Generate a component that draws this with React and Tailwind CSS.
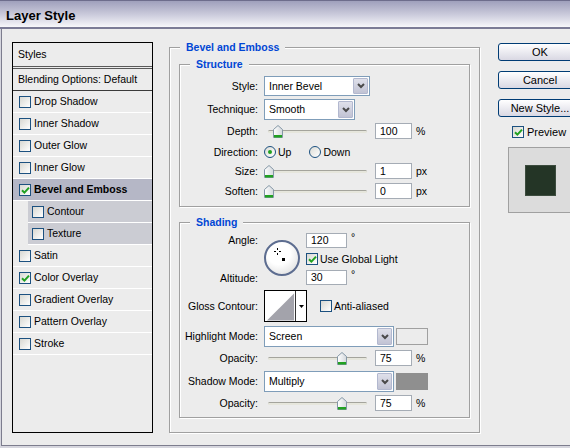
import React from 'react';

const font = { fontFamily: '"Liberation Sans", Arial, sans-serif' };

function Check({ checked }) {
  return (
    <div className="relative h-[12px] w-[12px] shrink-0 border border-[#1c5180] bg-gradient-to-br from-[#d8d8d2] to-white">
      {checked && (
        <svg className="absolute left-[1px] top-[1px]" width="9" height="9" viewBox="0 0 9 9">
          <path d="M1 4.2 L3.4 6.6 L8 1.6" fill="none" stroke="#21a121" strokeWidth="2" />
        </svg>
      )}
    </div>
  );
}

function Radio({ on }) {
  return (
    <div className="flex h-[12px] w-[12px] shrink-0 items-center justify-center rounded-full border border-[#1c5180] bg-gradient-to-br from-[#dcdcd6] to-white">
      {on && <div className="h-[4px] w-[4px] rounded-full bg-[#21a121]" />}
    </div>
  );
}

function Chevron() {
  return (
    <svg width="8" height="6" viewBox="0 0 8 6">
      <polyline points="1,1 4,4 7,1" fill="none" stroke="#4a4a4a" strokeWidth="2" />
    </svg>
  );
}

function Select({ text, w, h }) {
  return (
    <div className={`flex items-stretch border border-[#7f9db9] bg-white ${w} ${h}`}>
      <span className="flex flex-1 items-center pl-[4px]">{text}</span>
      <div className="m-[1px] flex w-[15px] items-center justify-center rounded-[1px] border border-[#b2b8cf] bg-gradient-to-b from-[#dfe0ea] to-[#c1c3d4]">
        <Chevron />
      </div>
    </div>
  );
}

function Input({ value, w = 'w-[37px]', h = 'h-[16px]' }) {
  return (
    <div className={`flex items-center border border-[#a5acb5] bg-white pl-[4px] ${w} ${h}`}>{value}</div>
  );
}

function Slider({ pos }) {
  return (
    <div className="relative h-[14px] w-[111px]">
      <div className="absolute left-[4px] top-[6px] h-[3px] w-[99px] rounded-full border-t border-[#a4a49c] bg-[#e6e6dc]" />
      <svg className="absolute top-[1px]" style={{ left: pos }} width="10" height="13" viewBox="0 0 10 13">
        <defs>
          <linearGradient id="th" x1="0" y1="0" x2="1" y2="0">
            <stop offset="0" stopColor="#ffffff" />
            <stop offset="1" stopColor="#d4d8dc" />
          </linearGradient>
        </defs>
        <path d="M5 0.5 L9.5 4.5 V12.5 H0.5 V4.5 Z" fill="url(#th)" stroke="#8497a6" />
        <rect x="1" y="10" width="8" height="2.5" fill="#21a121" />
      </svg>
    </div>
  );
}

function Group({ title, className, children }) {
  return (
    <div className={`relative border border-[#a0a0a0] shadow-[inset_1px_1px_0_#fff,1px_1px_0_#fff] ${className}`}>
      <span className="absolute left-[10px] top-[-8px] bg-[#ececec] px-[6px] text-[10.5px] font-bold leading-[14px] text-[#0046d5]">
        {title}
      </span>
      {children}
    </div>
  );
}

function Label({ children, className = '' }) {
  return <div className={`w-[79px] shrink-0 text-right pr-[1px] ${className}`}>{children}</div>;
}

function StyleRow({ label, checked, bold, sel, sub }) {
  return (
    <div className={`flex h-[22px] items-center border-b border-white ${sel ? 'bg-[#b5b7c6]' : ''} ${sub ? 'ml-[15px] bg-[#cbccd3] pl-[4px]' : 'pl-[6px]'}`}>
      <Check checked={checked} />
      <span className={`ml-[3px] ${bold ? 'font-bold' : ''}`}>{label}</span>
    </div>
  );
}

export default function App() {
  const styles = [
    { label: 'Drop Shadow' },
    { label: 'Inner Shadow' },
    { label: 'Outer Glow' },
    { label: 'Inner Glow' },
    { label: 'Bevel and Emboss', checked: true, bold: true, sel: true },
    { label: 'Contour', sub: true },
    { label: 'Texture', sub: true },
    { label: 'Satin' },
    { label: 'Color Overlay', checked: true },
    { label: 'Gradient Overlay' },
    { label: 'Pattern Overlay' },
    { label: 'Stroke' },
  ];

  return (
    <div className="flex h-[448px] w-[570px] flex-col overflow-hidden bg-[#d6d6de] text-[10.5px] leading-[13px] text-black" style={font}>
      {/* title bar */}
      <div className="flex h-[29px] shrink-0 items-center border-t border-b-2 border-t-[#6d6d8c] border-b-[#7b7b95] bg-gradient-to-b from-[#9fa0bc] via-[#c9c9da] to-[#f7f7fa] pl-[6px] pt-[2px]">
        <span className="text-[13px] font-bold">Layer Style</span>
      </div>

      {/* body */}
      <div className="ml-[1px] flex h-[417px] shrink-0 items-start border-b border-l border-[#7d7d8e] bg-[#ececec] pl-[10px] pt-[13px]">
        {/* styles list */}
        <div className="flex h-[391px] w-[141px] shrink-0 flex-col border border-black">
          <div className="flex h-[23px] items-center pl-[5px]">Styles</div>
          <div className="h-[3px] border-y border-[#5a5a5a]" />
          <div className="flex h-[22px] items-center border-b border-[#3a3a3a] pl-[5px]">Blending Options: Default</div>
          {styles.map((s) => (
            <StyleRow key={s.label} {...s} />
          ))}
        </div>

        {/* bevel and emboss */}
        <Group title="Bevel and Emboss" className="ml-[16px] mt-[5px] h-[386px] w-[311px] shrink-0 pl-[9px] pt-[16px]">
          <Group title="Structure" className="h-[143px] w-[291px] pt-[11px]">
            <div className="flex h-[20px] items-center">
              <Label>Style:</Label>
              <div className="ml-[5px]"><Select text="Inner Bevel" w="w-[106px]" h="h-[20px]" /></div>
            </div>
            <div className="mt-[3px] flex h-[21px] items-center">
              <Label>Technique:</Label>
              <div className="ml-[5px]"><Select text="Smooth" w="w-[91px]" h="h-[21px]" /></div>
            </div>
            <div className="mt-[3px] flex h-[16px] items-center">
              <Label>Depth:</Label>
              <div className="ml-[5px]"><Slider pos={9} /></div>
              <Input value="100" />
              <span className="ml-[4px]">%</span>
            </div>
            <div className="mt-[6px] flex h-[14px] items-center">
              <Label>Direction:</Label>
              <div className="ml-[5px] flex items-center">
                <Radio on />
                <span className="ml-[2px]">Up</span>
                <div className="ml-[18px]"><Radio /></div>
                <span className="ml-[2px]">Down</span>
              </div>
            </div>
            <div className="mt-[4px] flex h-[16px] items-center">
              <Label>Size:</Label>
              <div className="ml-[5px]"><Slider pos={0} /></div>
              <Input value="1" />
              <span className="ml-[4px]">px</span>
            </div>
            <div className="mt-[4px] flex h-[16px] items-center">
              <Label>Soften:</Label>
              <div className="ml-[5px]"><Slider pos={0} /></div>
              <Input value="0" />
              <span className="ml-[4px]">px</span>
            </div>
          </Group>

          <Group title="Shading" className="mt-[15px] h-[196px] w-[291px] pt-[10px]">
            {/* angle / altitude */}
            <div className="flex h-[53px] items-stretch">
              <div className="flex w-[79px] shrink-0 flex-col justify-between pr-[1px] text-right">
                <div className="flex h-[15px] items-center justify-end">Angle:</div>
                <div className="flex h-[15px] items-center justify-end">Altitude:</div>
              </div>
              <div className="relative ml-[5px] mt-[7px] h-[36px] w-[36px] shrink-0 rounded-full border-2 border-[#5d6d90] bg-[radial-gradient(circle_at_40%_35%,#ffffff_40%,#d6d6d6)]">
                <svg className="absolute left-[8px] top-[6px]" width="7" height="7" viewBox="0 0 7 7">
                  <path d="M3.5 0 V2 M3.5 5 V7 M0 3.5 H2 M5 3.5 H7" stroke="#000" strokeWidth="1" />
                </svg>
                <div className="absolute left-[16px] top-[16px] h-[3px] w-[3px] bg-black" />
              </div>
              <div className="ml-[6px] flex flex-col">
                <div className="flex items-start">
                  <Input value="120" w="w-[41px]" h="h-[15px]" />
                  <span className="ml-[4px] leading-[9px]">°</span>
                </div>
                <div className="mt-[5px] flex h-[12px] items-center">
                  <Check checked />
                  <span className="ml-[2px]">Use Global Light</span>
                </div>
                <div className="mt-[5px] flex items-start">
                  <Input value="30" w="w-[41px]" h="h-[15px]" />
                  <span className="ml-[4px] leading-[9px]">°</span>
                </div>
              </div>
            </div>

            {/* gloss contour */}
            <div className="mt-[4px] flex h-[32px] items-center">
              <Label>Gloss Contour:</Label>
              <div className="ml-[5px] flex h-[32px] w-[43px] border border-black bg-white">
                <svg width="31" height="30" viewBox="0 0 31 30" className="border-r border-[#333]">
                  <polygon points="2,30 30,2 30,30" fill="#a3a3ab" />
                </svg>
                <div className="flex flex-1 items-center justify-center">
                  <svg width="5" height="3" viewBox="0 0 5 3"><polygon points="0,0 5,0 2.5,3" fill="#000" /></svg>
                </div>
              </div>
              <div className="ml-[13px]"><Check /></div>
              <span className="ml-[2px]">Anti-aliased</span>
            </div>

            {/* highlight */}
            <div className="mt-[4px] flex h-[21px] items-center">
              <Label>Highlight Mode:</Label>
              <div className="ml-[5px]"><Select text="Screen" w="w-[130px]" h="h-[21px]" /></div>
              <div className="ml-[2px] h-[17px] w-[32px] border border-[#a0a0a0] bg-[#ececec]" />
            </div>
            <div className="mt-[3px] flex h-[16px] items-center">
              <Label>Opacity:</Label>
              <div className="ml-[5px]"><Slider pos={73} /></div>
              <Input value="75" />
              <span className="ml-[4px]">%</span>
            </div>

            {/* shadow */}
            <div className="mt-[5px] flex h-[21px] items-center">
              <Label>Shadow Mode:</Label>
              <div className="ml-[5px]"><Select text="Multiply" w="w-[130px]" h="h-[21px]" /></div>
              <div className="ml-[2px] h-[17px] w-[32px] bg-[#8f8f8f]" />
            </div>
            <div className="mt-[3px] flex h-[16px] items-center">
              <Label>Opacity:</Label>
              <div className="ml-[5px]"><Slider pos={73} /></div>
              <Input value="75" />
              <span className="ml-[4px]">%</span>
            </div>
          </Group>
        </Group>

        {/* buttons */}
        <div className="ml-[18px] mt-[1px] flex w-[84px] shrink-0 flex-col">
          {['OK', 'Cancel', 'New Style...'].map((b, i) => (
            <div
              key={b}
              className={`flex h-[18px] w-[84px] items-center justify-center whitespace-nowrap rounded-[3px] border border-[#003c74] bg-gradient-to-b from-white to-[#d9d8e3] text-[11px] ${i ? 'mt-[10px]' : ''}`}
            >
              {b}
            </div>
          ))}
          <div className="ml-[14px] mt-[9px] flex h-[12px] items-center">
            <Check checked />
            <span className="ml-[3px] text-[11px]">Preview</span>
          </div>
          <div className="ml-[10px] mt-[9px] flex h-[66px] w-[80px] items-start border border-[#a0a0a0] bg-[#dcdcdc] pl-[16px] pt-[17px]">
            <div className="h-[31px] w-[31px] border border-[#3c4c3e] bg-[#243526]" />
          </div>
        </div>
      </div>
    </div>
  );
}
